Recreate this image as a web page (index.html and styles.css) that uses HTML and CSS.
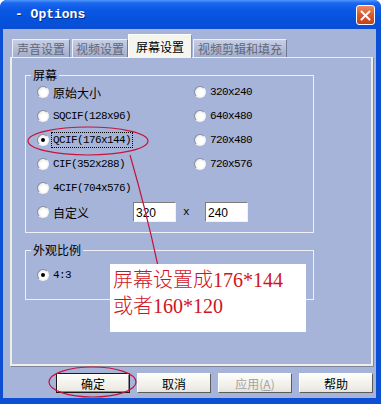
FILE: index.html
```html
<!DOCTYPE html>
<html lang="zh">
<head>
    <meta charset="UTF-8">
    <link rel="stylesheet" href="styles.css">
    <title>Options</title>
</head>
<body>

    <div class="window">
        <div class="titlebar">
            <span class="title">- Options</span>
            <span class="close">
                <svg width="11" height="11" viewBox="0 0 11 11"><path d="M1.5 1.5 L9.5 9.5 M9.5 1.5 L1.5 9.5" stroke="#fff" stroke-width="2" stroke-linecap="round"/></svg>
            </span>
        </div>

        <div class="client">
            <div class="tabs">
                <div class="tab t1">声音设置</div>
                <div class="tab t2">视频设置</div>
                <div class="tab active">屏幕设置</div>
                <div class="tab t4">视频剪辑和填充</div>
            </div>

            <div class="panel">
                <fieldset class="group screen">
                    <legend>屏幕</legend>
                    <div class="options">
                        <div class="opt"><span class="radio"></span><span>原始大小</span></div>
                        <div class="opt"><span class="radio"></span><span class="latin">320x240</span></div>
                        <div class="opt"><span class="radio"></span><span class="latin">SQCIF(128x96)</span></div>
                        <div class="opt"><span class="radio"></span><span class="latin">640x480</span></div>
                        <div class="opt"><span class="radio on"></span><span class="latin focus">QCIF(176x144)</span></div>
                        <div class="opt"><span class="radio"></span><span class="latin">720x480</span></div>
                        <div class="opt"><span class="radio"></span><span class="latin">CIF(352x288)</span></div>
                        <div class="opt"><span class="radio"></span><span class="latin">720x576</span></div>
                        <div class="opt"><span class="radio"></span><span class="latin">4CIF(704x576)</span></div>
                        <div class="opt"></div>
                        <div class="opt custom">
                            <span class="radio"></span><span class="custom-label">自定义</span>
                            <input class="num" type="text" value="320">
                            <span class="latin times">x</span>
                            <input class="num" type="text" value="240">
                        </div>
                    </div>
                </fieldset>

                <fieldset class="group aspect">
                    <legend>外观比例</legend>
                    <div class="opt"><span class="radio on"></span><span class="latin">4:3</span></div>
                </fieldset>
            </div>

            <div class="buttons">
                <button type="button" class="btn default">确定</button>
                <button type="button" class="btn">取消</button>
                <button type="button" class="btn" disabled>应用(<u>A</u>)</button>
                <button type="button" class="btn">帮助</button>
            </div>
        </div>

        <!-- red annotations drawn on top of the screenshot -->
        <svg class="marks" width="381" height="404" viewBox="0 0 381 404">
            <ellipse cx="88" cy="141" rx="60" ry="14" fill="none" stroke="#c8123a" stroke-width="1.2"/>
            <path d="M130 155 Q146 210 158 266" fill="none" stroke="#c8123a" stroke-width="1.2"/>
            <ellipse cx="92.5" cy="382" rx="43.5" ry="15" fill="none" stroke="#c8123a" stroke-width="1.2"/>
        </svg>
        <div class="note">屏幕设置成176*144<br>或者160*120</div>
    </div>

</body>
</html>
```

FILE: styles.css
```css
body {
    margin: 0;
    padding: 0;
    font-family: "Noto Sans CJK SC", sans-serif;
    font-size: 12px;
}

.window {
    position: relative;
    width: 381px;
    height: 404px;
    background-color: #0c4fd4;
    border-radius: 7px 7px 0 0;
    display: flex;
    flex-direction: column;
    overflow: hidden;
}

.titlebar {
    height: 29px;
    display: flex;
    align-items: flex-start;
    padding-left: 15px;
    background: linear-gradient(to bottom, #4f97fb 0, #1c66ee 3px, #0a58e4 10px, #0552dc 20px, #0a4ed3 29px);
}

.title {
    margin-top: 7px;
    color: #fff;
    font-family: "Liberation Mono", monospace;
    font-weight: bold;
    font-size: 13px;
    text-shadow: 1px 1px 0 #0b2a84;
}

.close {
    margin: 5px 6px 0 auto;
    width: 19px;
    height: 20px;
    box-sizing: border-box;
    border: 1px solid #fff;
    border-radius: 3px;
    background: linear-gradient(to bottom, #ec8a62, #d7582e 50%, #c4421c);
    display: flex;
    align-items: center;
    justify-content: center;
}

.client {
    flex: 1;
    margin: 0 5px 6px 3px;
    padding: 4px 3px 0 7px;
    background-color: #a7b4d9;
    display: flex;
    flex-direction: column;
}

.tabs {
    height: 24px;
    display: flex;
    align-items: flex-end;
    padding-left: 2px;
}

.tab {
    height: 18px;
    box-sizing: border-box;
    padding-top: 1px;
    text-align: center;
    line-height: 16px;
    color: #5f667b;
    background: linear-gradient(to bottom, #c7cfe4, #a2adcb);
    border: 1px solid;
    border-color: #eef0f7 #6f7894 transparent #eef0f7;
    border-bottom: none;
}

.t1 { width: 58px; margin-right: 2px; }
.t2 { width: 56px; }
.t4 { width: 94px; margin-left: 1px; }

.tab.active {
    position: relative;
    z-index: 1;
    width: 64px;
    height: 24px;
    margin-bottom: -1px;
    line-height: 21px;
    color: #000;
    background: #f5f5ef;
    border-color: #fff #8b93a8 transparent #fff;
}

.panel {
    height: 309px;
    box-sizing: border-box;
    border: 2px solid #efeee2;
    border-top-width: 1px;
    box-shadow: 1px 1px 0 #7d869e;
}

.group {
    width: 289px;
    box-sizing: border-box;
    margin: 11px 0 0 13px;
    padding: 0 0 8px 5px;
    border: 1px solid #eef0f6;
    min-width: 0;
}

.group legend {
    padding: 0 2px;
    line-height: 12px;
    color: #000;
}

.aspect {
    padding-top: 7px;
    padding-bottom: 12px;
}

.options {
    margin: -1px 0 0 6px;
    display: grid;
    grid-template-columns: 157px 1fr;
    grid-auto-rows: 24px;
}

.aspect .opt {
    margin-left: 6px;
    height: 24px;
}

.opt {
    display: flex;
    align-items: center;
    color: #000;
}

.radio {
    width: 12px;
    height: 12px;
    box-sizing: border-box;
    margin-right: 4px;
    border-radius: 50%;
    border: 1px solid;
    border-color: #8a8f9e #f4f4f4 #f4f4f4 #8a8f9e;
    background: radial-gradient(circle at 60% 60%, #ffffff 35%, #dcdcd6 100%);
    display: flex;
    align-items: center;
    justify-content: center;
    flex-shrink: 0;
}

.radio.on::after {
    content: "";
    width: 4px;
    height: 4px;
    border-radius: 50%;
    background: #000;
}

.latin {
    font-family: "Liberation Mono", monospace;
    font-size: 11px;
    letter-spacing: -0.6px;
}

.focus {
    outline: 1px dotted #000;
    outline-offset: 1px;
}

.custom {
    grid-column: 1 / -1;
}

.custom-label {
    width: 80px;
}

.num {
    width: 43px;
    height: 20px;
    box-sizing: border-box;
    margin: 0;
    padding: 1px 2px 0;
    border: 1px solid;
    border-color: #7d7d7d #f2f2f2 #f2f2f2 #7d7d7d;
    background: #fff;
    font-family: "Liberation Sans", sans-serif;
    font-size: 12px;
    color: #000;
}

.times {
    width: 6px;
    margin: 0 16px 0 7px;
}

.buttons {
    margin-top: 7px;
    height: 20px;
    display: flex;
    justify-content: flex-end;
    gap: 7px;
}

.btn {
    width: 74px;
    height: 20px;
    padding: 0;
    box-sizing: border-box;
    font-family: "Noto Sans CJK SC", sans-serif;
    font-size: 12px;
    color: #000;
    background: linear-gradient(to bottom, #fdfdfb, #f1f0ea 60%, #e6e5dd);
    border: 1px solid;
    border-color: #ffffff #5c5c5c #5c5c5c #ffffff;
}

.btn.default {
    border-color: #1a1a1a;
    box-shadow: inset 1px 1px 0 #fff, inset -1px -1px 0 #8c8c8c;
}

.btn:disabled {
    color: #a4a4a4;
}

.marks {
    position: absolute;
    left: 0;
    top: 0;
    pointer-events: none;
}

.note {
    position: absolute;
    left: 110px;
    top: 264px;
    width: 196px;
    height: 68px;
    box-sizing: border-box;
    padding: 3px 0 0 3px;
    background: #fff;
    color: #d0141e;
    font-family: "Liberation Serif", "Noto Sans CJK SC", serif;
    font-size: 20px;
    font-weight: 300;
    line-height: 26px;
}
```
